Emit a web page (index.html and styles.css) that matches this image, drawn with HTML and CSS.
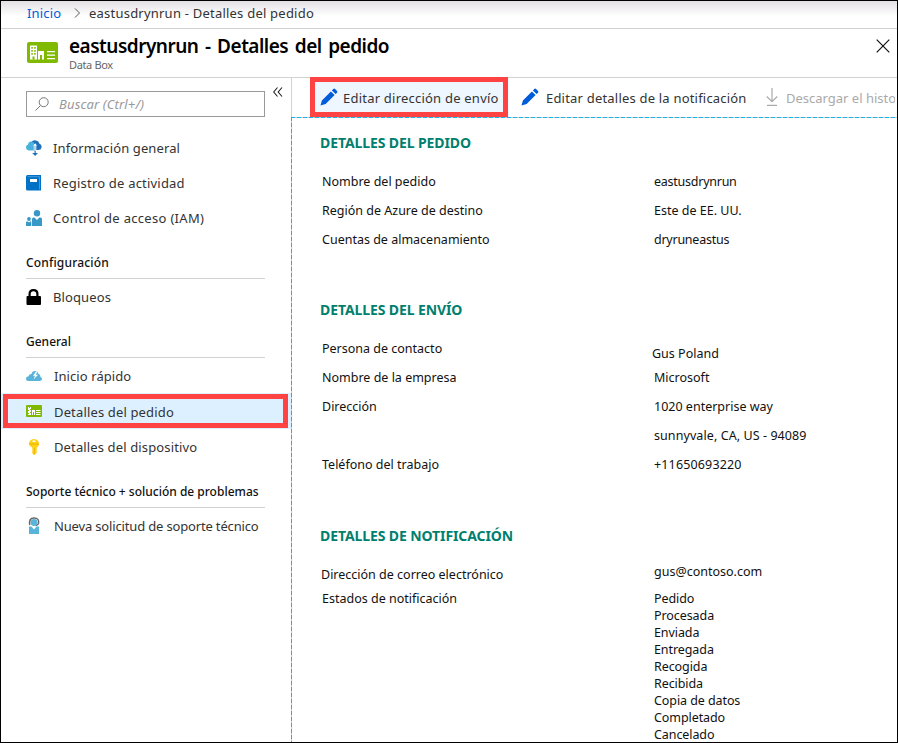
FILE: index.html
```html
<!DOCTYPE html>
<html lang="es">
<head>
<meta charset="utf-8">
<title>eastusdrynrun - Detalles del pedido</title>
<link rel="stylesheet" href="styles.css">
</head>
<body>
<svg width="0" height="0" class="defs" aria-hidden="true">
  <symbol id="card" viewBox="0 0 31 21">
    <rect width="31" height="21" rx="2" fill="#7fba00"/>
    <path fill="#fff" d="M3 3.500h7v14H3zM11 9h6v8.500h-2V13h-2v4.500h-2zM20 9h8v1.300h-8zM20 12.500h8v1.300h-8zM20 16h8v1.300h-8z"/>
    <path fill="#7fba00" d="M4.300 5h1.500v1.700H4.300zM7.200 5h1.500v1.700H7.200zM4.300 8h1.500v1.700H4.300zM7.200 8h1.500v1.700H7.200zM4.300 11h1.500v1.700H4.300zM7.200 11h1.500v1.700H7.200zM5.500 14.500h2v3h-2z"/>
  </symbol>
  <symbol id="pencil" viewBox="0 0 18 18">
    <path fill="#015cda" d="M.5 17.500 1.900 12.400 10.900 3.400 14.600 7.100 5.600 16.100zM11.900 2.400 13.300 1Q14.200.2 15.100 1L17 2.900Q17.800 3.800 17 4.700L15.600 6.100z"/>
  </symbol>
</svg>
<div class="window">
  <nav class="crumbs">
    <a class="home">Inicio</a>
    <svg class="chev" width="7" height="10" viewBox="0 0 7 10"><path d="M1 .5 5.500 5 1 9.500" fill="none" stroke="#555"/></svg>
    <span class="ls22">eastusdrynrun - Detalles del pedido</span>
  </nav>
  <header class="header">
    <svg class="logo" width="31" height="21"><use href="#card"/></svg>
    <div class="titles">
      <h1>eastusdrynrun - Detalles del pedido</h1>
      <p>Data Box</p>
    </div>
    <svg class="close" width="14" height="14" viewBox="0 0 14 14"><path d="m.7.700 12.600 12.600M13.300.7.700 13.300" stroke="#111" stroke-width="1.200"/></svg>
  </header>
  <div class="body">
    <aside class="side">
      <div class="searchrow">
        <div class="search">
          <svg width="14" height="14" viewBox="0 0 14 14" fill="none" stroke="#777"><circle cx="8.700" cy="5.200" r="4.500"/><path d="M5.500 8.500.5 13.500"/></svg>
          <span>Buscar (Ctrl+/)</span>
        </div>
        <svg class="collapse" width="10" height="10" viewBox="0 0 10 10" fill="none" stroke="#222" stroke-width="1.100"><path d="M4.500.5.700 5l3.800 4.500M9 .5 5.200 5 9 9.500"/></svg>
      </div>
      <ul>
        <li><svg width="16" height="16" viewBox="0 0 16 16"><path fill="#1f6fba" d="M5 2.500Q7-.3 10 .4 13 1 13.300 3.500 16 4.500 15.500 7.500 15 10 12 10H9z"/><path fill="#48b1dc" d="M3 10.500Q0 10 0 7.300 0 5 2 4.500 2.500 1.500 5 1.500 8 1.500 8.500 4.500 10 5.500 9.300 10.500z"/><path fill="#fff" d="M7.800 6h2.500v5H7.800z"/><path fill="#1f6fba" d="M8.500 6H9.700v7H12l-2.900 3-2.900-3h2.300z"/><path fill="#fff" d="m9.100 3.200 2 2.600H9.600V11h-1V5.800H7.100z"/></svg><span class="ls11">Información general</span></li>
        <li><svg width="16" height="16" viewBox="0 0 16 16"><path fill="#0072c6" d="M1.500 0H15v15.500H1.500Q0 15.500 0 14V1.500Q0 0 1.500 0z"/><path fill="#fff" d="M4 4h7v3H4z"/><path d="M1.500 1.700h12v12.800" fill="none" stroke="#5ba5dc" stroke-width=".8"/></svg><span class="ls21">Registro de actividad</span></li>
        <li><svg width="16" height="16" viewBox="0 0 16 16" fill="#3999c6"><circle cx="11" cy="3.300" r="3.200"/><circle cx="3" cy="9" r="1.900"/><path d="M6 16V9q0-1.500 1.500-1.500h1L11 10l2.300-2.500H14.500q1.500 0 1.500 1.500v7zM0 16v-3.500q0-1 1-1h1l1 1 1-1h1.300V16z"/></svg><span class="ls31">Control de acceso (IAM)</span></li>
      </ul>
      <h2 class="ls17">Configuración</h2>
      <ul>
        <li><svg width="16" height="16" viewBox="0 0 16 16"><path d="M3.600 7.500V5Q3.600 1.200 7.500 1.200T11.400 5v2.500" fill="none" stroke="#000" stroke-width="2.200"/><rect x=".5" y="7" width="14.500" height="9" rx="1"/></svg><span class="ls11">Bloqueos</span></li>
      </ul>
      <h2>General</h2>
      <ul class="shift">
        <li><svg width="16" height="16" viewBox="0 0 16 16"><path fill="#59b4d9" d="M2.500 13Q0 13 0 10.500 0 8.500 2.500 8.300 3 6 5.500 6 6 3 9 3q2.800 0 3.500 3 2 .2 2 3 1.500.5 1.500 2t-2 2z"/><path fill="#fff" d="M10 3.500 7 7.800h2L7.500 11.500 12 6.700H9.700L11.500 3.500z"/></svg><span class="ls08">Inicio rápido</span></li>
        <li class="active"><svg width="16" height="12" viewBox="0 0 16 12"><rect width="16" height="12" rx="1" fill="#7fba00"/><path fill="#fff" d="M2 2h1v1h1V2h1v2H4v1h1v2H4v1h1v2H2V9h1V8H2V6h1V5H2zM6 5h3v5H8V7H7v3H6zM10 5h4.500v1H10zM10 7h4.500v1H10zM10 9h4.500v1H10z"/></svg><span class="ls15">Detalles del pedido</span></li>
        <li><svg width="16" height="16" viewBox="0 0 16 16"><path fill="#fcd116" d="M8 0q5 .5 5 5 0 2-2.300 3.500V14L8 16.300 6.300 14.500V8.500Q3 7 3 5 3 .5 8 0z"/><path fill="#fff" d="M6.500 1.500h3V3h-3z"/><path fill="#e5a900" d="M3 4.500h10v1.200H3zM8 9h1v6H8z" opacity=".6"/></svg><span class="ls13">Detalles del dispositivo</span></li>
      </ul>
      <h2>Soporte técnico + solución de problemas</h2>
      <ul class="shift">
        <li><svg width="16" height="17" viewBox="0 0 16 17"><path d="M3.800 8Q2.500 1 8 1t4.500 5.500Q12 8 9.500 8.500" fill="none" stroke="#666" stroke-width="1.500"/><circle cx="8" cy="5.500" r="3.400" fill="#59b4d9"/><path fill="#59b4d9" d="M3 9.500h2.500L8 12.500l2.500-3H13V17H3z"/></svg><span class="lsn">Nueva solicitud de soporte técnico</span></li>
      </ul>
    </aside>
    <main class="main">
      <div class="toolbar">
        <div class="btn marked"><svg width="18" height="18"><use href="#pencil"/></svg><span class="ls22">Editar dirección de envío</span></div>
        <div class="btn second"><svg width="18" height="18"><use href="#pencil"/></svg><span class="ls21">Editar detalles de la notificación</span></div>
        <div class="btn off"><svg width="12" height="18" viewBox="0 0 12 18" fill="none" stroke="#aaa" stroke-width="1.200"><path d="M6 0v13.500M.8 8.500 6 13.700l5.200-5.200M1 17.300h10"/></svg><span>Descargar el histo</span></div>
      </div>
      <div class="content">
        <section class="order">
          <h3>DETALLES DEL PEDIDO</h3>
          <dl>
            <dt>Nombre del pedido</dt><dd class="tight">eastusdrynrun</dd>
            <dt>Región de Azure de destino</dt><dd>Este de EE. UU.</dd>
            <dt>Cuentas de almacenamiento</dt><dd class="tight">dryruneastus</dd>
          </dl>
        </section>
        <section class="ship">
          <h3>DETALLES DEL ENVÍO</h3>
          <dl>
            <dt>Persona de contacto</dt><dd class="contact">Gus Poland</dd>
            <dt>Nombre de la empresa</dt><dd>Microsoft</dd>
            <dt>Dirección</dt><dd>1020 enterprise way</dd>
            <dt></dt><dd class="ls08">sunnyvale, CA, US - 94089</dd>
            <dt>Teléfono del trabajo</dt><dd class="ls15">+11650693220</dd>
          </dl>
        </section>
        <section class="notify">
          <h3>DETALLES DE NOTIFICACIÓN</h3>
          <dl>
            <dt class="maillabel">Dirección de correo electrónico</dt><dd class="mail">gus@contoso.com</dd>
            <dt>Estados de notificación</dt>
            <dd class="states">Pedido<br>Procesada<br>Enviada<br>Entregada<br>Recogida<br>Recibida<br>Copia de datos<br>Completado<br>Cancelado</dd>
          </dl>
        </section>
      </div>
    </main>
  </div>
</div>
</body>
</html>
```
FILE: styles.css
```css
*, *::after { box-sizing: border-box; margin: 0; padding: 0; }
body { width: 898px; height: 743px; overflow: hidden; background: #fff; color: #333; font: 13px/18px "Noto Sans", "Open Sans", sans-serif; }
svg { display: block; flex: none; }
.defs { position: absolute; }
.window { width: 898px; height: 743px; border: 1px solid #000; overflow: hidden; display: flex; flex-direction: column; }

.crumbs { height: 28px; flex: none; display: flex; align-items: center; padding: 0 0 3px 26px; border-bottom: 1px solid #d2d2d2; background: linear-gradient(#e3dfe3, #fff 15px); white-space: nowrap; }
.home { color: #015cda; width: 47px; letter-spacing: .15px; }
.chev { margin-right: 8px; }

.header { height: 49px; flex: none; display: flex; border-bottom: 1px solid #d2d2d2; padding: 0 7px 0 26px; }
.logo { margin: 13px 11px 0 0; }
.titles { flex: 1; }
h1 { font-size: 19px; line-height: 24px; font-weight: 600; color: #000; letter-spacing: -.5px; word-spacing: 2.1px; margin-top: 5px; }
.titles p { font-size: 11px; line-height: 14px; color: #666; letter-spacing: -.35px; }
.close { margin-top: 10px; }

.body { flex: 1; display: flex; min-height: 0; }
.side { width: 290px; flex: none; }
.searchrow { display: flex; padding: 13px 0 0 25px; height: 52px; }
.search { width: 239px; height: 26px; border: 1px solid #999; display: flex; align-items: center; padding-left: 8px; color: #999; font-style: italic; }
.search span { margin-left: 10px; letter-spacing: .15px; }
.collapse { margin: -4px 0 0 8px; }
ul { list-style: none; }
li { height: 35px; display: flex; align-items: center; padding-left: 25px; white-space: nowrap; }
li span { margin-left: 11px; }
.shift li span { margin-left: 12px; }
h2 { font-size: 12px; line-height: 18px; font-weight: 500; color: #111; width: 239px; margin: 0 0 0 25px; height: 44px; padding-top: 19px; border-bottom: 1px solid #d2d2d2; white-space: nowrap; }
.active { height: 36px; background: #ddf0ff; position: relative; }
.active span { padding-top: 2px; }
.active::after { content: ""; position: absolute; left: 2px; top: 1px; width: 285px; height: 34px; border: 5px solid #ff4343; }

.main { flex: 1; min-width: 0; }
.toolbar { height: 39px; display: flex; border-left: 1px solid #d2d2d2; padding-left: 18px; margin-right: 2px; clip-path: inset(-1px 0 -1px 0); }
.btn { display: flex; align-items: center; height: 38px; white-space: nowrap; flex: none; }
.btn span { margin-left: 5px; padding-top: 1px; }
.marked { width: 199px; height: 39px; padding: 0 0 1px 10px; background: #eef6ff; position: relative; }
.marked::after { content: ""; position: absolute; left: 0; top: -1px; width: 198px; height: 40px; border: 5px solid #ff4343; }
.second { width: 244px; padding-left: 12px; }
.second span { margin-left: 7px; }
.off { color: #aaa; padding-left: 13px; }
.off span { margin-left: 8px; }

.content { height: 626px; padding: 0 0 0 29px; color: #111; font-size: 12.5px;
  background:
    repeating-linear-gradient(90deg, #1fb0ea 0 4px, #c9c9c9 4px 6px) 0 0 / 100% 1px no-repeat,
    repeating-linear-gradient(180deg, #1fb0ea 0 4px, #c9c9c9 4px 6px) 0 0 / 1px 100% no-repeat; }
h3 { font-size: 14px; line-height: 20px; font-weight: 700; color: #007f6e; letter-spacing: -.1px; margin-bottom: 14px; }
.order { padding-top: 16px; height: 183px; }
.ship { height: 226px; }
dl { display: grid; grid-template-columns: 332px 1fr; grid-auto-rows: 29px; line-height: 29px; padding-left: 2px; white-space: nowrap; }
.contact { position: relative; left: -2px; top: 5px; }
.maillabel { margin-left: -1px; }
.notify dl { grid-auto-rows: auto; grid-template-rows: 24px; margin-top: 17px; line-height: 17px; }
.notify dt, .notify .states { padding-top: 3px; }
.notify .states { letter-spacing: -.08px; }
.tight { letter-spacing: -.25px; }
.ls08 { letter-spacing: .08px; }
.ls11 { letter-spacing: .11px; }
.ls13 { letter-spacing: .13px; }
.ls15 { letter-spacing: .15px; }
.ls17 { letter-spacing: .17px; }
.ls21 { letter-spacing: .2px; }
.ls22 { letter-spacing: .22px; }
.ls31 { letter-spacing: .31px; }
.lsn { letter-spacing: -.16px; }
```
